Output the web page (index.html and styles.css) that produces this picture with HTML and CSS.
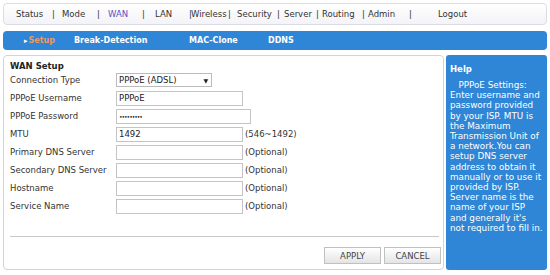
FILE: index.html
```html
<!DOCTYPE html>
<html>
<head>
<meta charset="utf-8">
<link rel="stylesheet" href="styles.css">
</head>
<body>
<div class="topnav">
  <span class="ni w36">Status</span><span class="ni w10">|</span>
  <span class="ni w35">Mode</span><span class="ni w11">|</span>
  <span class="ni w34 active">WAN</span><span class="ni w13">|</span>
  <span class="ni w34">LAN</span><span class="ni w2">|</span>
  <span class="ni w37">Wireless</span><span class="ni w9">|</span>
  <span class="ni w40">Security</span><span class="ni w7">|</span>
  <span class="ni w32">Server</span><span class="ni w6">|</span>
  <span class="ni w40">Routing</span><span class="ni w6">|</span>
  <span class="ni w41">Admin</span><span class="ni w29">|</span>
  <span class="ni">Logout</span>
</div>
<div class="subnav">
  <span class="si s-setup"><span class="arrow">&#9656;</span><span class="current">Setup</span></span>
  <span class="si s-bd">Break-Detection</span>
  <span class="si s-mac">MAC-Clone</span>
  <span class="si">DDNS</span>
</div>
<div class="main">
  <div class="panel">
    <div class="panel-title">WAN Setup</div>
    <div class="form">
      <div class="row"><span class="label">Connection Type</span><span class="select">PPPoE (ADSL)<span class="caret">&#9660;</span></span></div>
      <div class="row"><span class="label">PPPoE Username</span><span class="input w127">PPPoE</span></div>
      <div class="row"><span class="label">PPPoE Password</span><span class="input w135 pw">&bull;&bull;&bull;&bull;&bull;&bull;&bull;&bull;&bull;</span></div>
      <div class="row"><span class="label">MTU</span><span class="input w127">1492</span><span class="note">(546~1492)</span></div>
      <div class="row"><span class="label">Primary DNS Server</span><span class="input w127"></span><span class="note">(Optional)</span></div>
      <div class="row"><span class="label">Secondary DNS Server</span><span class="input w127"></span><span class="note">(Optional)</span></div>
      <div class="row"><span class="label">Hostname</span><span class="input w127"></span><span class="note">(Optional)</span></div>
      <div class="row"><span class="label">Service Name</span><span class="input w127"></span><span class="note">(Optional)</span></div>
    </div>
    <div class="divider"></div>
    <div class="buttons">
      <span class="btn">APPLY</span>
      <span class="btn">CANCEL</span>
    </div>
  </div>
  <div class="help">
    <div class="help-title">Help</div>
    <p class="help-text">&nbsp;&nbsp;&nbsp;PPPoE Settings:<br>Enter username and<br>password provided<br>by your ISP. MTU is<br>the Maximum<br>Transmission Unit of<br>a network.You can<br>setup DNS server<br>address to obtain it<br>manually or to use it<br>provided by ISP.<br>Server name is the<br>name of your ISP<br>and generally it's<br>not required to fill in.</p>
  </div>
</div>
</body>
</html>
```
FILE: styles.css
```css
* { box-sizing: border-box; }
html, body { margin: 0; padding: 0; background: #ffffff; }
body {
  padding: 3px;
  font-family: "DejaVu Sans", Verdana, sans-serif;
  font-size: 8.5px;
  color: #333;
  width: 550px;
  height: 275px;
  overflow: hidden;
}
.topnav {
  height: 22px;
  border: 1px solid #dcdce4;
  border-radius: 4px;
  background: linear-gradient(#ffffff, #f3f3f8);
  display: flex;
  align-items: center;
  padding-left: 12px;
  font-size: 8.5px;
  color: #333;
}
.ni { flex: none; white-space: nowrap; }
.ni.active { color: #5252c8; }
.w2 { width: 2px; } .w3 { width: 3px; } .w5 { width: 5px; } .w6 { width: 6px; } .w7 { width: 7px; } .w9 { width: 9px; }
.w10 { width: 10px; } .w11 { width: 11px; } .w13 { width: 13px; } .w29 { width: 29px; }
.w32 { width: 32px; } .w34 { width: 34px; } .w35 { width: 35px; } .w36 { width: 36px; } .w37 { width: 37px; }
.w40 { width: 40px; } .w41 { width: 41px; }
.subnav {
  margin-top: 6px;
  height: 19px;
  border-radius: 4px;
  background: #2f86d6;
  display: flex;
  align-items: center;
  font-weight: bold;
  color: #fff;
  font-size: 8px;
  padding-left: 21px;
}
.si { flex: none; white-space: nowrap; }
.s-setup { width: 50px; }
.s-bd { width: 115px; }
.s-mac { width: 79px; }
.current { color: #eb9866; }
.arrow { color: #fff; font-size: 7px; margin-right: 1px; }
.main {
  display: flex;
  gap: 2px;
  margin-top: 5px;
  height: 215px;
}
.panel {
  width: 441px;
  border: 1px solid #d4d4d4;
  border-radius: 4px;
  padding: 5px 2px 0 6px;
  display: flex;
  flex-direction: column;
}
.panel-title { font-weight: bold; color: #222; height: 10px; line-height: 10px; }
.row { display: flex; align-items: center; height: 18px; }
.label { width: 106px; color: #333; }
.select {
  width: 96px; height: 14px;
  border: 1px solid #bbb;
  display: flex; align-items: center;
  padding-left: 2px;
  color: #222;
}
.caret { font-size: 6px; margin-left: 27px; }
.input {
  height: 15px;
  border: 1px solid #c4c4c4;
  padding-left: 2px;
  display: flex; align-items: center;
  color: #222;
}
.w127 { width: 127px; }
.w135 { width: 135px; }
.pw { font-size: 6px; letter-spacing: -1px; }
.note { margin-left: 2px; color: #333; }
.divider { margin-top: 21px; border-top: 1px solid #c8c8c8; margin-right: 2px; }
.buttons { display: flex; justify-content: flex-end; gap: 3px; margin-top: 10px; }
.btn {
  width: 57px; height: 17px;
  border: 1px solid #c0c0c0;
  background: linear-gradient(#ffffff, #e4e4e4);
  display: flex; align-items: center; justify-content: center;
  color: #444; font-size: 8.5px;
}
.help {
  width: 101px;
  background: #2f86d6;
  border-radius: 3px;
  color: #fff;
  padding: 9px 2px 0 4px;
  font-size: 8.8px;
  white-space: nowrap;
  overflow: hidden;
}
.help-title { font-weight: bold; line-height: 11px; font-size: 8.5px; }
.help-text { margin: 5px 0 0 0; line-height: 10.2px; }
```
